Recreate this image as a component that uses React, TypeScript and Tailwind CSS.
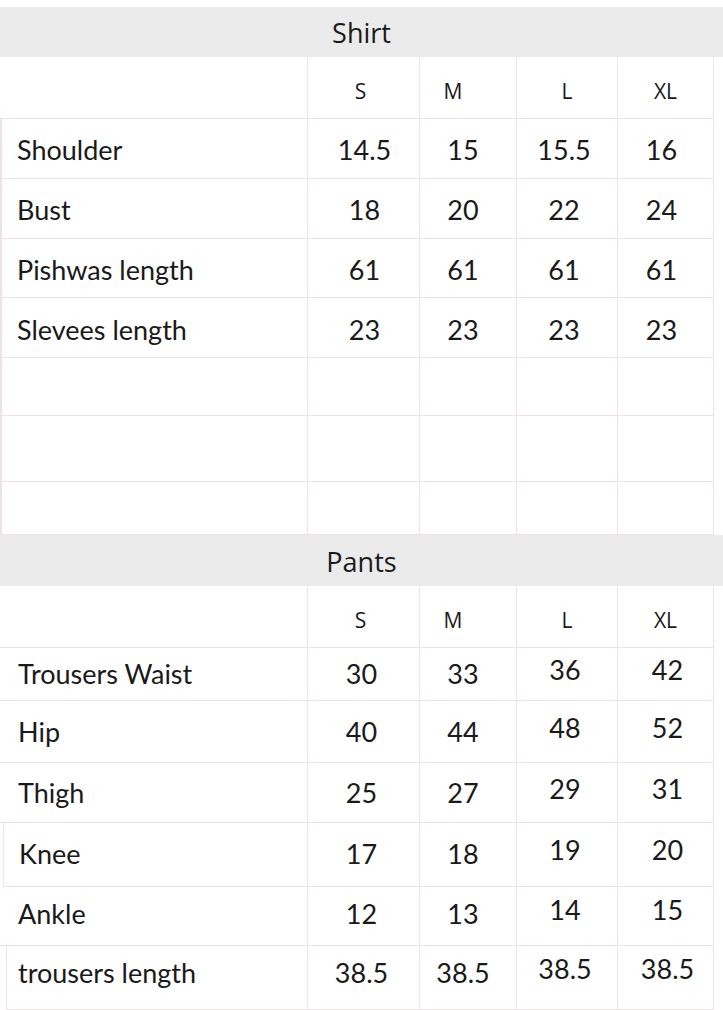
import React from "react";

const cols = "grid grid-cols-[307px_112px_97px_101px_97px_1fr]";
const line = "border-[#eee2e5]";
const headFont = { fontFamily: '"Open Sans", Lato, sans-serif' };

type Row = { label: string; vals: string[]; h: string; pad?: string; edge?: string; lift?: boolean };

const shirt: Row[] = [
  { label: "Shoulder", vals: ["14.5", "15", "15.5", "16"], h: "h-[60px]", pad: "pt-[4px]", edge: "border-l-2 pl-[15px]" },
  { label: "Bust", vals: ["18", "20", "22", "24"], h: "h-[60px]", pad: "pt-[4px]", edge: "border-l-2 pl-[15px]" },
  { label: "Pishwas length", vals: ["61", "61", "61", "61"], h: "h-[59px]", pad: "pt-[4px]", edge: "border-l-2 pl-[15px]" },
  { label: "Slevees length", vals: ["23", "23", "23", "23"], h: "h-[60px]", pad: "pt-[6px]", edge: "border-l-2 pl-[15px]" },
  { label: "", vals: ["", "", "", ""], h: "h-[58px]", edge: "border-l-2" },
  { label: "", vals: ["", "", "", ""], h: "h-[66px]", edge: "border-l-2" },
  { label: "", vals: ["", "", "", ""], h: "h-[53px]", edge: "border-l-2" },
];

const pants: Row[] = [
  { label: "Trousers Waist", vals: ["30", "33", "36", "42"], h: "h-[53px]", edge: "pl-[18px]", lift: true },
  { label: "Hip", vals: ["40", "44", "48", "52"], h: "h-[62px]", pad: "pt-[2px]", edge: "pl-[18px]", lift: true },
  { label: "Thigh", vals: ["25", "27", "29", "31"], h: "h-[60px]", pad: "pt-[2px]", edge: "pl-[18px]", lift: true },
  { label: "Knee", vals: ["17", "18", "19", "20"], h: "h-[64px]", edge: "border-l ml-[3px] pl-[15px]", lift: true },
  { label: "Ankle", vals: ["12", "13", "14", "15"], h: "h-[59px]", pad: "pb-[3px]", edge: "pl-[18px]", lift: true },
  { label: "trousers length", vals: ["38.5", "38.5", "38.5", "38.5"], h: "h-[64px]", pad: "pb-[9px]", edge: "border-l ml-[6px] pl-[11px]", lift: true },
];

const shirtShift = ["pl-[2px]", "pr-[10px]", "pr-[6px]", "pr-[8px]"];
const pantsShift = ["pr-[4px]", "pr-[10px]", "pr-[4px]", "pl-[4px]"];

const SizeHead = ({ title, band }: { title: string; band: string }) => (
  <>
    <div
      className={`${band} bg-[#ebebeb] flex items-center justify-center pt-[3px] text-[27px] text-[#1a1a1a]`}
      style={headFont}
    >
      {title}
    </div>
    <div className={`${cols} h-[62px] text-[21px] text-[#1a1a1a]`} style={headFont}>
      <div className={`border-b ${line}`} />
      <div className={`border-l border-b ${line} flex items-center justify-center pt-[8px] pr-[6px]`}>S</div>
      <div className={`border-l border-b ${line} flex items-center justify-center pt-[8px] pr-[30px]`}>M</div>
      <div className={`border-l border-b ${line} flex items-center justify-center pt-[8px]`}>L</div>
      <div className={`border-l border-r border-b ${line} flex items-center justify-center pt-[8px]`}>XL</div>
      <div />
    </div>
  </>
);

const Rows = ({ rows, shift }: { rows: Row[]; shift: string[] }) => (
  <>
    {rows.map((r, i) => (
      <div key={i} className={`${cols} ${r.h} text-[27px] text-[#1a1a1a]`}>
        <div className={`border-b ${line} ${r.edge ?? ""} ${r.pad ?? ""} flex items-center`}>{r.label}</div>
        {r.vals.map((v, j) => (
          <div
            key={j}
            className={`border-l border-b ${line} ${j === 3 ? "border-r" : ""} ${r.pad ?? ""} flex items-center justify-center ${shift[j]}`}
          >
            <span className={r.lift && j >= 2 ? "-translate-y-[4px]" : ""}>{v}</span>
          </div>
        ))}
        <div />
      </div>
    ))}
  </>
);

export default function App() {
  return (
    <div className="w-[723px] h-[1010px] bg-white overflow-hidden pt-[7px]" style={{ fontFamily: "Lato, sans-serif" }}>
      <SizeHead title="Shirt" band="h-[50px]" />
      <Rows rows={shirt} shift={shirtShift} />
      <SizeHead title="Pants" band="h-[51px]" />
      <Rows rows={pants} shift={pantsShift} />
    </div>
  );
}
